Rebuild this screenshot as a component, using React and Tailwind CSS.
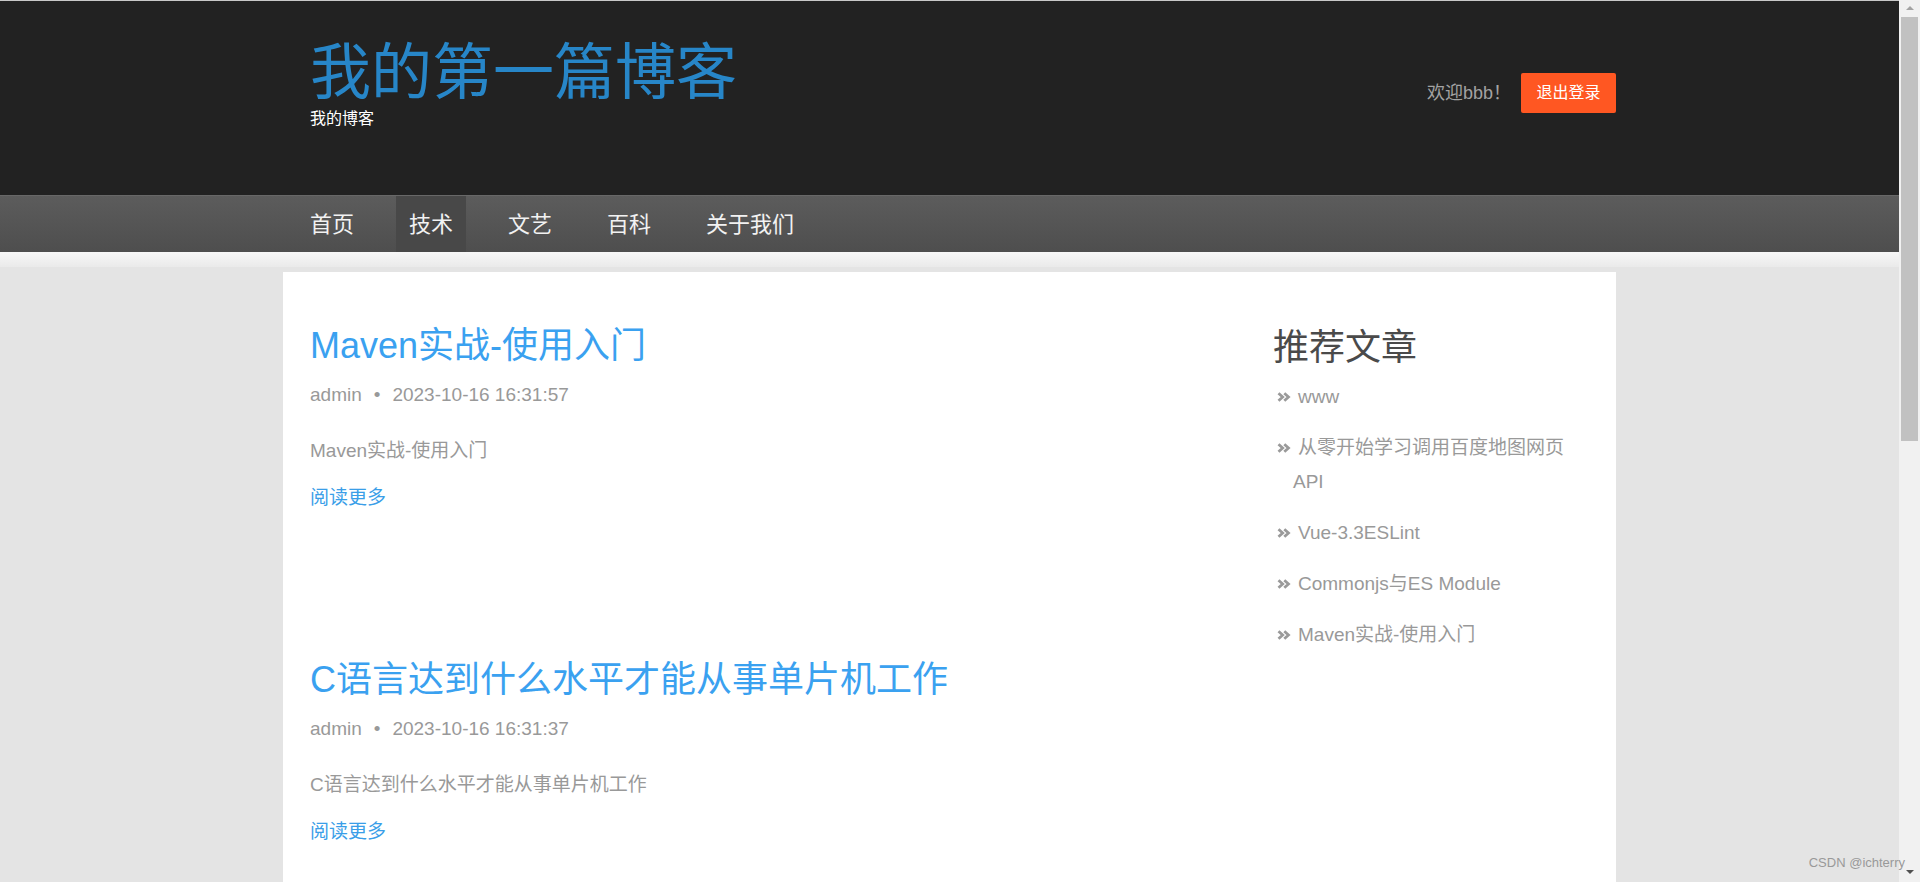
import { useState } from 'react'

const posts = [
  {
    id: 1,
    title: 'Maven实战-使用入门',
    author: 'admin',
    time: '2023-10-16 16:31:57',
    summary: 'Maven实战-使用入门',
  },
  {
    id: 2,
    title: 'C语言达到什么水平才能从事单片机工作',
    author: 'admin',
    time: '2023-10-16 16:31:37',
    summary: 'C语言达到什么水平才能从事单片机工作',
  },
]

const recommends = ['www', '从零开始学习调用百度地图网页API', 'Vue-3.3ESLint', 'Commonjs与ES Module', 'Maven实战-使用入门']

const navItems = ['首页', '技术', '文艺', '百科', '关于我们']

const DoubleArrow = () => (
  <svg width="14" height="10" viewBox="0 0 14 10" className="inline-block mr-[7px] align-[1px]">
    <polyline points="1.5,1.2 5.7,5 1.5,8.8" fill="none" stroke="#9a9a9a" strokeWidth="2.8" />
    <polyline points="7.3,1.2 11.5,5 7.3,8.8" fill="none" stroke="#9a9a9a" strokeWidth="2.8" />
  </svg>
)

const App = () => {
  const [active, setActive] = useState('技术')

  return (
    <div className="relative flex h-[882px] w-full overflow-hidden bg-[#e4e4e4] font-['Liberation_Sans','Noto_Sans_CJK_SC',sans-serif]">
      <div className="flex min-w-0 flex-1 flex-col">
        {/* Header */}
        <header className="h-[195px] shrink-0 border-t border-[#c9c9c9] bg-[#222222]">
          <div className="mx-auto flex w-[1333px] items-start justify-between">
            <div className="pl-[27px] pt-[36px]">
              <h1 className="text-[61px] leading-[61px] text-[#2786c8] font-['Noto_Sans_CJK_SC',sans-serif]">
                我的第一篇博客
              </h1>
              <p className="mt-[11px] text-[16px] leading-[20px] text-white">我的博客</p>
            </div>
            <div className="mt-[72px] flex items-center">
              <span className="mr-[10px] text-[18px] text-[#a3a3a3]">欢迎bbb！</span>
              <button className="h-[40px] w-[95px] rounded-[2px] bg-[#ff5722] text-[16px] text-white">
                退出登录
              </button>
            </div>
          </div>
        </header>

        {/* Nav */}
        <nav className="h-[57px] shrink-0 border-t border-[#686868] bg-gradient-to-b from-[#5c5c5c] to-[#4e4e4e]">
          <ul className="mx-auto flex h-full w-[1333px] gap-[29px] pl-[14px]">
            {navItems.map((item) => (
              <li
                key={item}
                onClick={() => setActive(item)}
                className={`flex h-full cursor-pointer items-center px-[13px] text-[22px] text-[#f2f2f2] ${
                  active === item ? 'bg-[#484848]' : ''
                }`}
              >
                {item}
              </li>
            ))}
          </ul>
        </nav>
        <div className="h-[15px] shrink-0 bg-gradient-to-b from-[#f7f7f7] to-[#eaeaea]" />

        {/* Content */}
        <main className="mx-auto mt-[5px] flex w-[1333px] flex-1 bg-white px-[27px]">
          <div className="flex-1 pt-[54px]">
            {posts.map((post) => (
              <article key={post.id} className="mb-[150px]">
                <h2 className="text-[36px] leading-[40px] text-[#3aa1f0]">{post.title}</h2>
                <div className="mt-[17px] text-[19px] leading-[24px] text-[#999]">
                  {post.author}
                  <span className="mx-[12px]">•</span>
                  {post.time}
                </div>
                <p className="mt-[32px] text-[19px] leading-[24px] text-[#999]">{post.summary}</p>
                <a className="mt-[23px] block text-[19px] leading-[24px] text-[#3a9ee8]">阅读更多</a>
              </article>
            ))}
          </div>

          <aside className="w-[316px] shrink-0 pt-[56px]">
            <h3 className="text-[36px] leading-[40px] text-[#4a4a4a]">推荐文章</h3>
            <ul className="mt-[12px] space-y-[17px] pl-[20px]">
              {recommends.map((title) => (
                <li key={title} className="-indent-[16px] text-[19px] leading-[34px] text-[#999]">
                  <DoubleArrow />
                  {title}
                </li>
              ))}
            </ul>
          </aside>
        </main>
      </div>

      {/* Scrollbar */}
      <div className="flex w-[21px] shrink-0 flex-col items-center bg-[#f1f1f1]">
        <div className="mt-[6px] h-0 w-0 border-x-[4px] border-b-[4px] border-x-transparent border-b-[#a3a3a3]" />
        <div className="mt-[7px] h-[424px] w-[17px] bg-[#c1c1c1]" />
        <div className="flex-1" />
        <div className="mb-[8px] h-0 w-0 border-x-[4px] border-t-[4px] border-x-transparent border-t-[#505050]" />
      </div>

      {/* Watermark */}
      <div className="absolute bottom-[11px] right-[15px] text-[13px] leading-[16px] text-[#999]">
        CSDN @ichterry
      </div>
    </div>
  )
}

export default App
